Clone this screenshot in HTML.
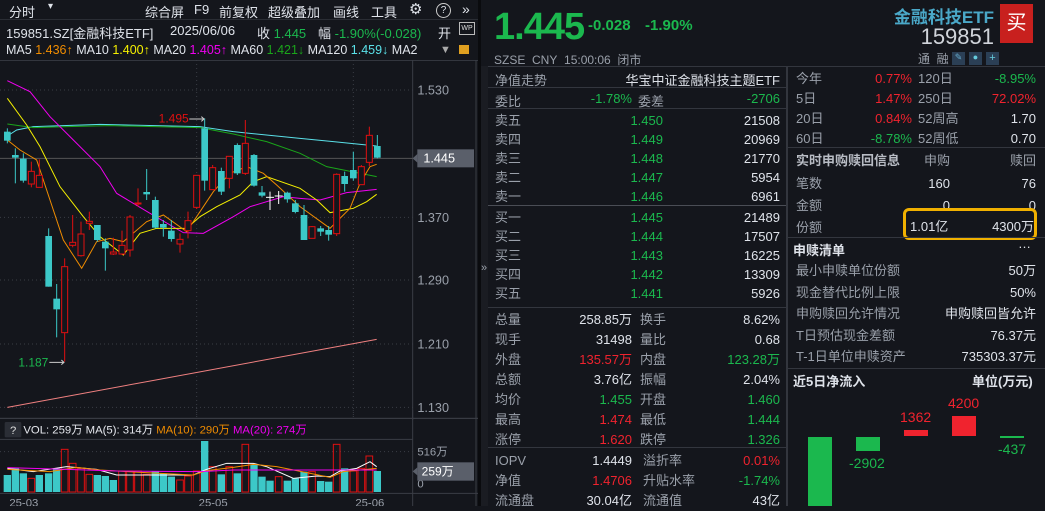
<!DOCTYPE html><html><head><meta charset="utf-8"><style>
*{margin:0;padding:0;box-sizing:border-box}
body{width:1045px;height:506px;background:#14161c;color:#c8ccd4;font-family:"Liberation Sans","Noto Sans CJK SC",sans-serif;font-size:13px;position:relative;overflow:hidden}
.a{position:absolute;white-space:nowrap}
.g{color:#1bb84e}.r{color:#f0232e}.w{color:#dfe3ea}.gr{color:#9aa0aa}
.R{text-align:right}
.hl{position:absolute;height:1px;background:#33363e}
</style></head><body>
<div class="a" style="left:0;top:0;width:480px;height:20px;background:#14161c;border-bottom:1px solid #2a2d34"></div>
<div class="a w" style="left:9px;top:2px;font-size:13px">分时</div>
<div class="a w" style="left:48px;top:1px;font-size:10px">▾</div>
<div class="a w" style="left:145px;top:2px">综合屏</div>
<div class="a w" style="left:194px;top:2px">F9</div>
<div class="a w" style="left:219px;top:2px">前复权</div>
<div class="a w" style="left:268px;top:2px">超级叠加</div>
<div class="a w" style="left:333px;top:2px">画线</div>
<div class="a w" style="left:371px;top:2px">工具</div>
<div class="a w" style="left:409px;top:0px;font-size:15px">⚙</div>
<div class="a w" style="left:436px;top:3px;width:15px;height:15px;border:1px solid #ccc;border-radius:50%;font-size:10px;text-align:center;line-height:13px">?</div>
<div class="a w" style="left:462px;top:1px;font-size:14px">»</div>
<div class="a w" style="left:6px;top:23px">159851.SZ[金融科技ETF]</div>
<div class="a w" style="left:170px;top:23px">2025/06/06</div>
<div class="a w" style="left:257px;top:23px">收 <span class="g">1.445</span></div>
<div class="a w" style="left:318px;top:23px">幅 <span class="g">-1.90%(-0.028)</span></div>
<div class="a w" style="left:438px;top:23px">开</div>
<div class="a" style="left:459px;top:22px;width:16px;height:13px;border:1px solid #bbb;font-size:7px;color:#ddd;text-align:center;line-height:11px">WP</div>
<div class="a" style="left:6px;top:43px;font-size:12.5px"><span class="w">MA5 </span><span style="color:#f08c00">1.436↑</span> <span class="w">MA10 </span><span style="color:#f5f000">1.400↑</span> <span class="w">MA20 </span><span style="color:#f000f0">1.405↑</span> <span class="w">MA60 </span><span style="color:#1aa51a">1.421↓</span> <span class="w">MA120 </span><span style="color:#5ae0e8">1.459↓</span> <span class="w">MA2</span></div>
<div class="a" style="left:440px;top:44px;color:#aaa;font-size:11px">▼</div>
<div class="a" style="left:459px;top:45px;width:10px;height:9px;background:#e0a020"></div>
<div class="hl" style="left:0;top:60px;width:480px"></div>
<svg class="a" style="left:0;top:60px" width="480" height="360" viewBox="0 0 1440 1080">
<g stroke="#3a3d45" stroke-width="3" stroke-dasharray="3 9">
<line x1="0" y1="90" x2="1238" y2="90"/><line x1="0" y1="472" x2="1238" y2="472"/><line x1="0" y1="660" x2="1238" y2="660"/><line x1="0" y1="852" x2="1238" y2="852"/><line x1="0" y1="1042" x2="1238" y2="1042"/>
<line x1="590" y1="0" x2="590" y2="1080"/><line x1="1060" y1="0" x2="1060" y2="1080"/>
</g>
<line x1="1238" y1="0" x2="1238" y2="1080" stroke="#3a3d45" stroke-width="3"/>
<line x1="1428" y1="0" x2="1428" y2="1080" stroke="#3a3d45" stroke-width="3"/>
<line x1="0" y1="295" x2="1238" y2="295" stroke="#555" stroke-width="3"/>
<line x1="0" y1="1075" x2="1440" y2="1075" stroke="#3a3d45" stroke-width="3"/>
<g fill="#9aa0aa" font-size="38" font-family="Liberation Sans">
<text x="1252" y="104">1.530</text><text x="1252" y="486">1.370</text><text x="1252" y="674">1.290</text><text x="1252" y="866">1.210</text><text x="1252" y="1056">1.130</text></g>
<polygon points="1238,295 1252,282 1252,308" fill="#5a5f6a"/>
<rect x="1252" y="268" width="170" height="54" fill="#5a5f6a"/>
<text x="1270" y="308" fill="#fff" font-size="38" font-family="Liberation Sans">1.445</text>
<g fill="none" stroke-width="3">
<polyline stroke="#f08080" points="22,1042 1130,838"/>
<polyline stroke="#5ae0e8" points="22,228 50,210 100,200 300,193 600,200 700,215 900,235 1000,245 1130,258"/>
<polyline stroke="#1aa51a" points="22,192 100,203 200,200 330,197 600,203 700,222 800,245 900,280 980,320 1130,350"/>
<polyline stroke="#f000f0" points="22,62 90,95 150,170 220,240 300,320 350,400 450,460 550,518 610,520 700,470 750,440 850,410 900,415 960,420 1040,398 1130,388"/>
<polyline stroke="#f5f000" points="22,115 80,195 120,260 180,380 250,470 300,530 370,585 420,520 470,505 560,505 600,470 650,440 720,405 760,365 800,350 900,385 950,420 990,458 1060,445 1100,425 1130,403"/>
<polyline stroke="#f08c00" points="22,240 60,270 110,300 150,420 190,540 245,625 290,545 330,535 370,545 440,485 490,465 560,515 640,395 690,340 740,320 790,340 830,375 900,440 990,505 1050,445 1080,370 1110,320 1130,313"/>
</g>
<g stroke-width="3">
<g stroke="#3cc8c8">
<line x1="22" y1="205" x2="22" y2="250"/><line x1="46" y1="265" x2="46" y2="370"/><line x1="70" y1="280" x2="70" y2="368"/><line x1="146" y1="505" x2="146" y2="680"/><line x1="170" y1="672" x2="170" y2="832"/><line x1="292" y1="495" x2="292" y2="545"/><line x1="316" y1="535" x2="316" y2="632"/><line x1="440" y1="327" x2="440" y2="420"/><line x1="466" y1="410" x2="466" y2="505"/><line x1="490" y1="480" x2="490" y2="530"/><line x1="514" y1="480" x2="514" y2="545"/><line x1="614" y1="175" x2="614" y2="392"/><line x1="664" y1="323" x2="664" y2="405"/><line x1="712" y1="250" x2="712" y2="345"/><line x1="762" y1="282" x2="762" y2="380"/><line x1="786" y1="378" x2="786" y2="412"/><line x1="862" y1="395" x2="862" y2="428"/><line x1="886" y1="420" x2="886" y2="460"/><line x1="912" y1="435" x2="912" y2="540"/><line x1="962" y1="498" x2="962" y2="528"/><line x1="986" y1="498" x2="986" y2="542"/><line x1="1034" y1="335" x2="1034" y2="395"/><line x1="1060" y1="275" x2="1060" y2="362"/><line x1="1132" y1="225" x2="1132" y2="295"/>
</g>
<g stroke="#e01010">
<line x1="94" y1="305" x2="94" y2="382"/><line x1="118" y1="298" x2="118" y2="382"/><line x1="194" y1="595" x2="194" y2="905"/><line x1="218" y1="465" x2="218" y2="562"/><line x1="243" y1="485" x2="243" y2="590"/><line x1="268" y1="455" x2="268" y2="510"/><line x1="340" y1="533" x2="340" y2="585"/><line x1="366" y1="512" x2="366" y2="585"/><line x1="390" y1="465" x2="390" y2="590"/><line x1="414" y1="385" x2="414" y2="440"/><line x1="540" y1="520" x2="540" y2="578"/><line x1="564" y1="455" x2="564" y2="535"/><line x1="590" y1="345" x2="590" y2="447"/><line x1="638" y1="315" x2="638" y2="390"/><line x1="688" y1="290" x2="688" y2="385"/><line x1="736" y1="180" x2="736" y2="345"/><line x1="936" y1="498" x2="936" y2="535"/><line x1="1010" y1="340" x2="1010" y2="528"/><line x1="1084" y1="315" x2="1084" y2="374"/><line x1="1108" y1="200" x2="1108" y2="318"/>
</g>
<g stroke="#fff"><line x1="810" y1="395" x2="810" y2="450"/><line x1="798" y1="412" x2="822" y2="412"/><line x1="836" y1="393" x2="836" y2="432"/><line x1="824" y1="408" x2="848" y2="408"/></g>
</g>
<g fill="#3cc8c8">
<rect x="12" y="215" width="20" height="27"/><rect x="36" y="285" width="20" height="8"/><rect x="60" y="296" width="20" height="66"/><rect x="136" y="528" width="20" height="152"/><rect x="160" y="716" width="20" height="32"/><rect x="282" y="495" width="20" height="45"/><rect x="306" y="545" width="20" height="20"/><rect x="430" y="396" width="20" height="7"/><rect x="456" y="420" width="20" height="83"/><rect x="480" y="492" width="20" height="11"/><rect x="504" y="512" width="20" height="25"/><rect x="604" y="205" width="20" height="157"/><rect x="654" y="333" width="20" height="62"/><rect x="702" y="255" width="20" height="85"/><rect x="752" y="285" width="20" height="92"/><rect x="776" y="397" width="20" height="10"/><rect x="852" y="398" width="20" height="20"/><rect x="876" y="430" width="20" height="26"/><rect x="902" y="465" width="20" height="75"/><rect x="952" y="505" width="20" height="10"/><rect x="976" y="510" width="20" height="14"/><rect x="1024" y="348" width="20" height="24"/><rect x="1050" y="330" width="20" height="25"/><rect x="1122" y="258" width="20" height="35"/>
</g>
<g fill="#14161c" stroke="#e01010" stroke-width="3">
<rect x="85" y="334" width="18" height="38"/><rect x="109" y="346" width="18" height="36"/><rect x="185" y="620" width="18" height="198"/><rect x="209" y="547" width="18" height="9"/><rect x="234" y="522" width="18" height="65"/><rect x="259" y="484" width="18" height="6"/><rect x="331" y="576" width="18" height="6"/><rect x="357" y="556" width="18" height="26"/><rect x="381" y="471" width="18" height="99"/><rect x="405" y="429" width="18" height="3"/><rect x="531" y="538" width="18" height="14"/><rect x="555" y="482" width="18" height="30"/><rect x="581" y="346" width="18" height="96"/><rect x="629" y="323" width="18" height="66"/><rect x="679" y="289" width="18" height="66"/><rect x="727" y="250" width="18" height="90"/><rect x="927" y="500" width="18" height="35"/><rect x="1001" y="343" width="18" height="178"/><rect x="1075" y="320" width="18" height="54"/><rect x="1099" y="226" width="18" height="81"/>
</g>
<text x="476" y="188" fill="#e01010" font-size="36" font-family="Liberation Sans">1.495</text>
<path d="M568,177H612M604,170L612,177L604,184" fill="none" stroke="#ccc" stroke-width="3"/>
<text x="55" y="920" fill="#1bb84e" font-size="36" font-family="Liberation Sans">1.187</text>
<path d="M148,907H192M184,900L192,907L184,914" fill="none" stroke="#ccc" stroke-width="3"/>
</svg>
<svg class="a" style="left:0;top:410px" width="480" height="96" viewBox="0 0 1440 288">
<line x1="0" y1="25" x2="1440" y2="25" stroke="#3a3d45" stroke-width="3"/>
<line x1="0" y1="88" x2="1238" y2="88" stroke="#3a3d45" stroke-width="3"/>
<line x1="0" y1="125" x2="1238" y2="125" stroke="#3a3d45" stroke-width="3" stroke-dasharray="3 9"/>
<line x1="0" y1="250" x2="1440" y2="250" stroke="#3a3d45" stroke-width="3"/>
<line x1="1238" y1="0" x2="1238" y2="288" stroke="#3a3d45" stroke-width="3"/>
<line x1="1428" y1="0" x2="1428" y2="288" stroke="#3a3d45" stroke-width="3"/>
<line x1="590" y1="0" x2="590" y2="30" stroke="#3a3d45" stroke-width="3" stroke-dasharray="3 9"/>
<line x1="1060" y1="0" x2="1060" y2="30" stroke="#3a3d45" stroke-width="3" stroke-dasharray="3 9"/>
<rect x="14" y="36" width="50" height="46" rx="4" fill="#2b2e36"/>
<text x="30" y="72" fill="#ddd" font-size="34" font-family="Liberation Sans">?</text>
<text x="70" y="70" font-size="34" font-family="Liberation Sans,Noto Sans CJK SC"><tspan fill="#e6e8ee">VOL: 259万  MA(5): 314万  </tspan><tspan fill="#f08c00">MA(10): 290万  </tspan><tspan fill="#f000f0">MA(20): 274万</tspan></text>
<g fill="#3cc8c8">
<rect x="11" y="195" width="22" height="51"/><rect x="35" y="175" width="22" height="71"/><rect x="59" y="190" width="22" height="56"/><rect x="107" y="195" width="22" height="51"/><rect x="135" y="190" width="22" height="56"/><rect x="159" y="175" width="22" height="71"/><rect x="281" y="195" width="22" height="51"/><rect x="305" y="198" width="22" height="48"/><rect x="329" y="210" width="22" height="36"/><rect x="455" y="183" width="22" height="63"/><rect x="479" y="190" width="22" height="56"/><rect x="503" y="200" width="22" height="46"/><rect x="603" y="93" width="22" height="153"/><rect x="653" y="193" width="22" height="53"/><rect x="701" y="190" width="22" height="56"/><rect x="751" y="165" width="22" height="81"/><rect x="775" y="200" width="22" height="46"/><rect x="799" y="212" width="22" height="34"/><rect x="851" y="212" width="22" height="34"/><rect x="875" y="205" width="22" height="41"/><rect x="901" y="185" width="22" height="61"/><rect x="951" y="213" width="22" height="33"/><rect x="975" y="215" width="22" height="31"/><rect x="1023" y="175" width="22" height="71"/><rect x="1121" y="183" width="22" height="63"/>
</g>
<g fill="none" stroke="#e01010" stroke-width="3">
<rect x="84" y="205" width="20" height="41"/><rect x="184" y="118" width="20" height="128"/><rect x="208" y="160" width="20" height="86"/><rect x="233" y="175" width="20" height="71"/><rect x="258" y="193" width="20" height="53"/><rect x="356" y="183" width="20" height="63"/><rect x="380" y="183" width="20" height="63"/><rect x="404" y="183" width="20" height="63"/><rect x="430" y="193" width="20" height="53"/><rect x="530" y="210" width="20" height="36"/><rect x="554" y="198" width="20" height="48"/><rect x="580" y="183" width="20" height="63"/><rect x="628" y="170" width="20" height="76"/><rect x="678" y="170" width="20" height="76"/><rect x="726" y="103" width="20" height="143"/><rect x="826" y="200" width="20" height="46"/><rect x="926" y="185" width="20" height="61"/><rect x="1000" y="103" width="20" height="143"/><rect x="1050" y="183" width="20" height="63"/><rect x="1074" y="175" width="20" height="71"/><rect x="1098" y="138" width="20" height="108"/>
</g>
<g fill="none" stroke-width="3">
<polyline stroke="#fff" points="22,175 100,185 200,170 290,178 350,195 580,195 620,178 680,160 760,160 800,170 880,205 950,198 990,200 1020,183 1070,175 1110,155 1130,170"/>
<polyline stroke="#f08c00" points="22,178 150,185 230,172 300,180 400,186 580,195 620,182 700,172 760,163 830,170 920,188 990,202 1030,185 1130,175"/>
<polyline stroke="#f000f0" points="22,173 200,178 350,183 600,185 700,180 1130,180"/>
</g>
<g fill="#9aa0aa" font-size="34" font-family="Liberation Sans,Noto Sans CJK SC"><text x="1252" y="137">516万</text><text x="1252" y="232">0</text>
<text x="28" y="290">25-03</text><text x="596" y="290">25-05</text><text x="1066" y="290">25-06</text></g>
<polygon points="1238,184 1252,172 1252,196" fill="#5a5f6a"/>
<rect x="1252" y="157" width="170" height="55" fill="#5a5f6a"/>
<text x="1265" y="197" fill="#fff" font-size="36" font-family="Liberation Sans,Noto Sans CJK SC">259万</text>
</svg>
<div class="a" style="left:478px;top:0;width:3px;height:506px;background:#0a0b0e"></div>
<div class="a g" style="left:494px;top:6px;font-size:38px;font-weight:bold;letter-spacing:-1px">1.445</div>
<div class="a g" style="left:588px;top:17px;font-size:15px;font-weight:bold">-0.028</div>
<div class="a g" style="left:645px;top:17px;font-size:15px;font-weight:bold">-1.90%</div>
<div class="a R" style="left:850px;top:3px;width:144px;font-size:17px;font-weight:bold;color:#4aa8c8">金融科技ETF</div>
<div class="a" style="left:888px;top:24px;font-size:22px;color:#d0d4da;width:106px;text-align:right">159851</div>
<div class="a" style="left:1000px;top:4px;width:33px;height:39px;background:#c8201e;color:#fff;font-size:20px;text-align:center;line-height:38px">买</div>
<div class="a gr" style="left:494px;top:51px;font-size:12px">SZSE&nbsp;&nbsp;CNY&nbsp;&nbsp;15:00:06&nbsp;&nbsp;闭市</div>
<div class="a gr" style="left:918px;top:50px;font-size:12px">通&nbsp;&nbsp;融</div>
<div class="a" style="left:952px;top:52px;width:13px;height:13px;background:#2b3f55;color:#6ac;font-size:9px;text-align:center">✎</div>
<div class="a" style="left:969px;top:52px;width:13px;height:13px;background:#2b3f55;color:#6cd;font-size:9px;text-align:center">●</div>
<div class="a" style="left:986px;top:52px;width:13px;height:13px;background:#2b3f55;color:#6cd;font-size:11px;text-align:center;line-height:12px">+</div>
<div class="hl" style="left:488px;top:66px;width:557px"></div>
<div class="a" style="left:786px;top:66px;width:2px;height:440px;background:#33363e"></div>
<div class="a" style="left:481px;top:66px;width:7px;height:440px;background:#1a1c22"></div>
<div class="a gr" style="left:481px;top:262px;font-size:11px">»</div>
<div class="a gr" style="left:495px;top:70px">净值走势</div>
<div class="a w" style="left:600px;top:70px;width:180px;text-align:right">华宝中证金融科技主题ETF</div>
<div class="hl" style="left:488px;top:87px;width:298px"></div>
<div class="a gr" style="left:495px;top:91px">委比</div>
<div class="a g R" style="left:540px;top:91px;width:92px">-1.78%</div>
<div class="a gr" style="left:638px;top:91px">委差</div>
<div class="a g R" style="left:680px;top:91px;width:100px">-2706</div>
<div class="hl" style="left:488px;top:108px;width:298px"></div>
<div class="a gr" style="left:495px;top:111px;line-height:19px">卖五<br>卖四<br>卖三<br>卖二<br>卖一</div>
<div class="a g R" style="left:600px;top:111px;width:63px;line-height:19px">1.450<br>1.449<br>1.448<br>1.447<br>1.446</div>
<div class="a w R" style="left:700px;top:111px;width:80px;line-height:19px">21508<br>20969<br>21770<br>5954<br>6961</div>
<div class="hl" style="left:488px;top:205px;width:298px;background:#4a4d55"></div>
<div class="a gr" style="left:495px;top:208px;line-height:19px">买一<br>买二<br>买三<br>买四<br>买五</div>
<div class="a g R" style="left:600px;top:208px;width:63px;line-height:19px">1.445<br>1.444<br>1.443<br>1.442<br>1.441</div>
<div class="a w R" style="left:700px;top:208px;width:80px;line-height:19px">21489<br>17507<br>16225<br>13309<br>5926</div>
<div class="hl" style="left:488px;top:307px;width:298px"></div>
<div class="a gr" style="left:495px;top:310px;line-height:20px">总量<br>现手<br>外盘<br>总额<br>均价<br>最高<br>涨停</div>
<div class="a R" style="left:540px;top:310px;width:92px;line-height:20px"><span class="w">258.85万</span><br><span class="w">31498</span><br><span class="r">135.57万</span><br><span class="w">3.76亿</span><br><span class="g">1.455</span><br><span class="r">1.474</span><br><span class="r">1.620</span></div>
<div class="a gr" style="left:640px;top:310px;line-height:20px">换手<br>量比<br>内盘<br>振幅<br>开盘<br>最低<br>跌停</div>
<div class="a R" style="left:680px;top:310px;width:100px;line-height:20px"><span class="w">8.62%</span><br><span class="w">0.68</span><br><span class="g">123.28万</span><br><span class="w">2.04%</span><br><span class="g">1.460</span><br><span class="g">1.444</span><br><span class="g">1.326</span></div>
<div class="hl" style="left:488px;top:447px;width:298px"></div>
<div class="a gr" style="left:495px;top:451px;line-height:20px">IOPV<br>净值<br>流通盘</div>
<div class="a R" style="left:540px;top:451px;width:92px;line-height:20px"><span class="w">1.4449</span><br><span class="r">1.4706</span><br><span class="w">30.04亿</span></div>
<div class="a gr" style="left:643px;top:451px;line-height:20px">溢折率<br>升贴水率<br>流通值</div>
<div class="a R" style="left:680px;top:451px;width:100px;line-height:20px"><span class="r">0.01%</span><br><span class="g">-1.74%</span><br><span class="w">43亿</span></div>
<div class="a gr" style="left:796px;top:69px;line-height:20px">今年<br>5日<br>20日<br>60日</div>
<div class="a R" style="left:840px;top:69px;width:72px;line-height:20px"><span class="r">0.77%</span><br><span class="r">1.47%</span><br><span class="r">0.84%</span><br><span class="g">-8.78%</span></div>
<div class="a gr" style="left:918px;top:69px;line-height:20px">120日<br>250日<br>52周高<br>52周低</div>
<div class="a R" style="left:960px;top:69px;width:76px;line-height:20px"><span class="g">-8.95%</span><br><span class="r">72.02%</span><br><span class="w">1.70</span><br><span class="w">0.70</span></div>
<div class="hl" style="left:788px;top:147px;width:257px"></div>
<div class="a" style="left:796px;top:150px;color:#b8bcc4;font-weight:bold">实时申购赎回信息</div>
<div class="a gr R" style="left:900px;top:150px;width:50px">申购</div>
<div class="a gr R" style="left:990px;top:150px;width:46px">赎回</div>
<div class="a gr" style="left:796px;top:173px;line-height:22px">笔数<br>金额<br>份额</div>
<div class="a w R" style="left:890px;top:173px;width:60px;line-height:22px">160<br>0<br>&nbsp;</div>
<div class="a w R" style="left:976px;top:173px;width:60px;line-height:22px">76<br>0<br>&nbsp;</div>
<div class="a" style="left:903px;top:208px;width:134px;height:32px;border:3px solid #f0b000;border-radius:6px"></div>
<div class="a w" style="left:910px;top:216px">1.01亿</div>
<div class="a w R" style="left:970px;top:216px;width:64px">4300万</div>
<div class="hl" style="left:788px;top:237px;width:257px"></div>
<div class="a w" style="left:793px;top:240px;font-weight:bold">申赎清单</div>
<div class="a w" style="left:1018px;top:236px">…</div>
<div class="a gr" style="left:796px;top:260px;line-height:21.5px">最小申赎单位份额<br>现金替代比例上限<br>申购赎回允许情况<br>T日预估现金差额<br>T-1日单位申赎资产</div>
<div class="a w R" style="left:900px;top:260px;width:136px;line-height:21.5px">50万<br>50%<br>申购赎回皆允许<br>76.37元<br>735303.37元</div>
<div class="hl" style="left:788px;top:368px;width:257px"></div>
<div class="a w" style="left:793px;top:371px;font-weight:bold">近5日净流入</div>
<div class="a w" style="left:972px;top:371px;font-weight:bold">单位(万元)</div>
<div class="a" style="left:808px;top:437px;width:24px;height:69px;background:#1bb84e"></div>
<div class="a" style="left:856px;top:437px;width:24px;height:14px;background:#1bb84e"></div>
<div class="a g" style="left:849px;top:455px;font-size:14px">-2902</div>
<div class="a" style="left:904px;top:430px;width:24px;height:6px;background:#f0232e"></div>
<div class="a r" style="left:900px;top:409px;font-size:14px">1362</div>
<div class="a" style="left:952px;top:416px;width:24px;height:20px;background:#f0232e"></div>
<div class="a r" style="left:948px;top:395px;font-size:14px">4200</div>
<div class="a" style="left:1000px;top:436px;width:24px;height:2px;background:#1bb84e"></div>
<div class="a g" style="left:998px;top:441px;font-size:14px">-437</div>
</body></html>
